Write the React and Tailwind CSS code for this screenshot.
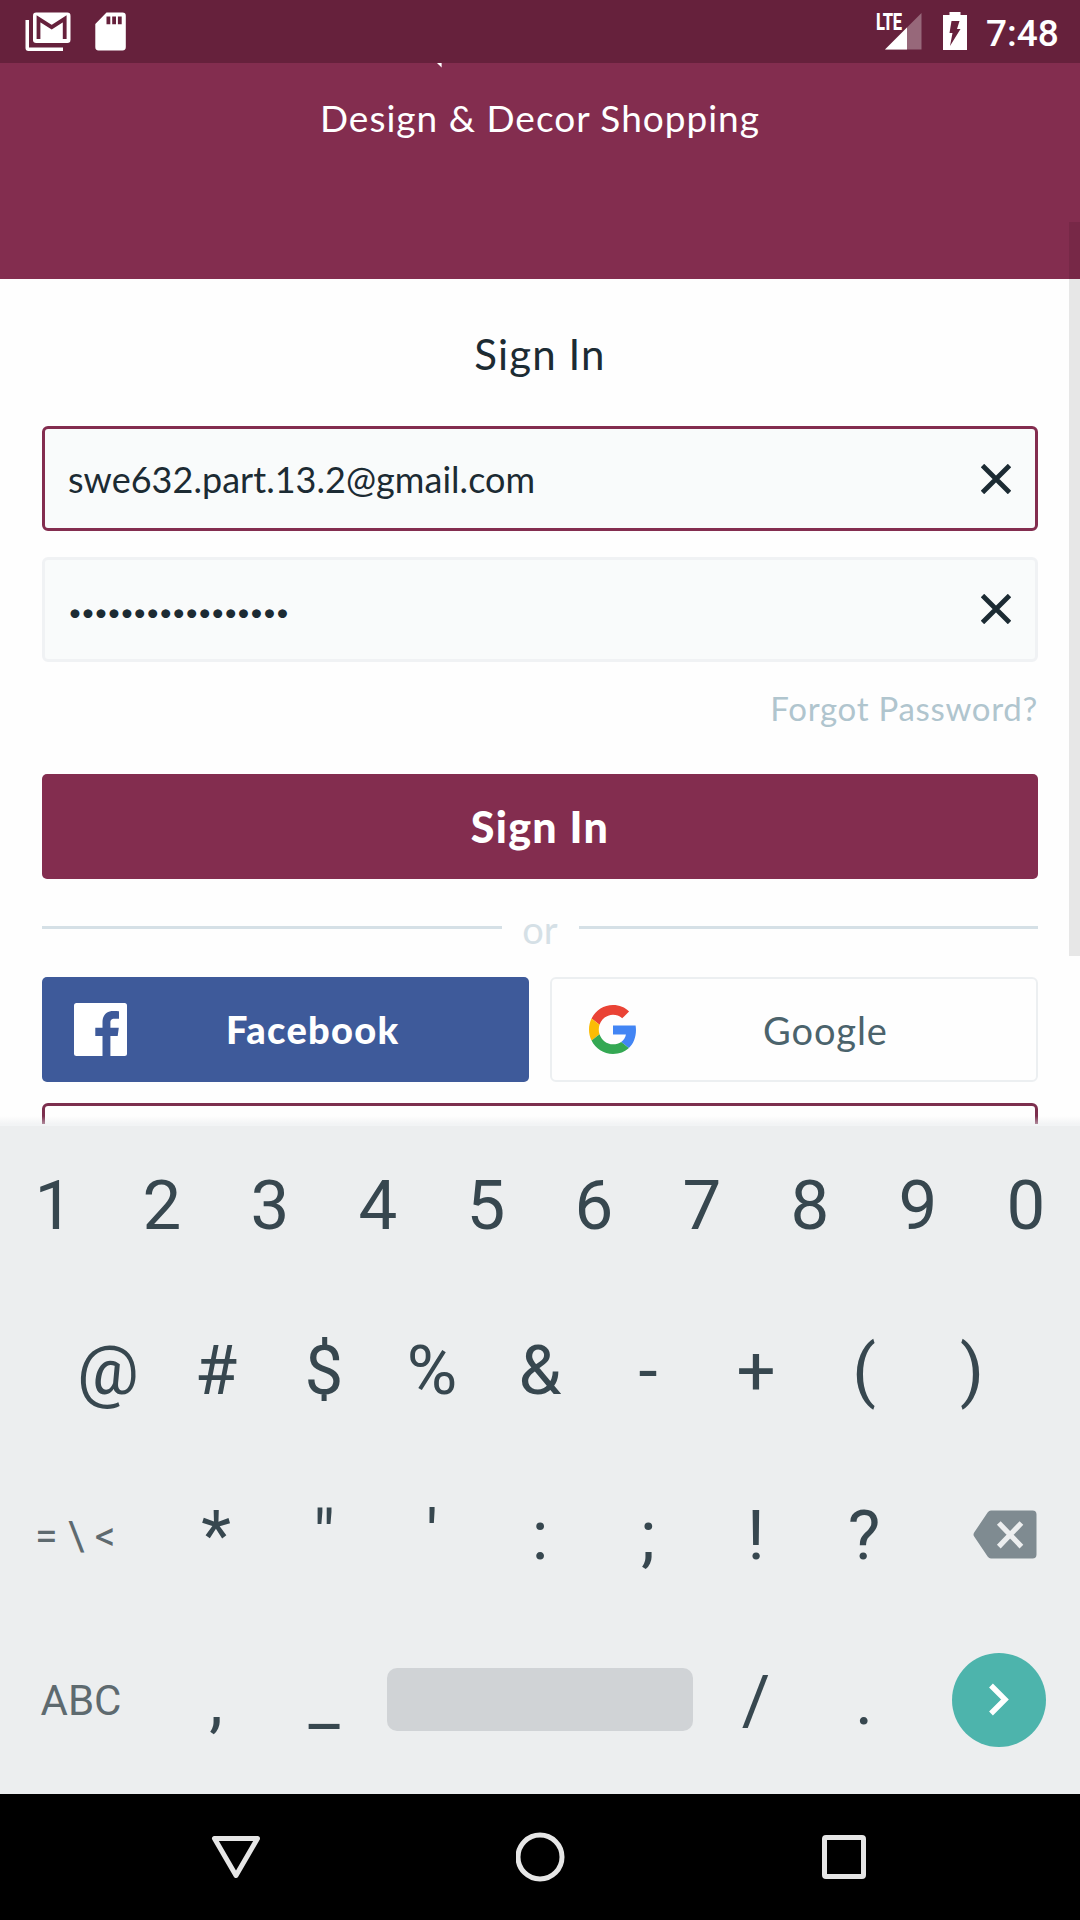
const DIGITS = ["1", "2", "3", "4", "5", "6", "7", "8", "9", "0"];
const SYMBOLS = ["@", "#", "$", "%", "&", "-", "+", "(", ")"];
const PUNCTUATION = ["*", '"', "'", ":", ";", "!", "?"];

function GmailIcon() {
  return (
    <svg width="46" height="40" viewBox="0 0 46 40" fill="none">
      <path d="M0.5 8H4v27.5h34V39H3.5a3 3 0 0 1-3-3z" fill="#fff" />
      <rect x="8" y="0.5" width="37.5" height="30.5" rx="3.2" fill="#fff" />
      <path d="M13.5 27V6.8L26.7 15.2L39.7 6.8V27" stroke="#66213c" strokeWidth="3.8" />
    </svg>
  );
}

function SdCardIcon() {
  return (
    <svg width="31" height="39" viewBox="0 0 31 39">
      <path d="M11.5 0.5H27.5A3.3 3.3 0 0 1 30.8 3.8V35A3.3 3.3 0 0 1 27.5 38.4H3.5A3.3 3.3 0 0 1 0.3 35V12z" fill="#fff" />
      <path d="M11.5 4.5h3.8v7.8h-3.8zM17.2 4.5H21v7.8h-3.8zM22.9 4.5h3.8v7.8h-3.8z" fill="#66213c" />
    </svg>
  );
}

function SignalIcon() {
  return (
    <div className="relative h-[38px] w-[46px]">
      <svg width="46" height="38" viewBox="0 0 46 38">
        <path d="M9 37.5L45.5 1V37.5z" fill="#fff" opacity="0.32" />
        <path d="M9 37.5L31 15.5V37.5z" fill="#fff" />
      </svg>
      <span className="absolute left-0 top-[-1px] origin-left scale-x-[0.72] text-[23px] font-extrabold leading-[23px] tracking-[-0.6px]">
        LTE
      </span>
    </div>
  );
}

function BatteryIcon() {
  return (
    <svg width="24" height="38" viewBox="0 0 24 38">
      <path d="M6.5 0H17.5V3H24V38H0V3H6.5z" fill="#fff" />
      <path d="M8.5 9H16.5L14 17H17.5L7 34L9.5 21H6.5z" fill="#66213c" />
    </svg>
  );
}

function StatusBar() {
  return (
    <div className="flex h-[63px] shrink-0 items-start bg-[#66213c] pl-[24.5px] pr-[21px] pt-3 text-white">
      <GmailIcon />
      <div className="ml-[24.5px]">
        <SdCardIcon />
      </div>
      <div className="flex-1" />
      <SignalIcon />
      <div className="ml-[21px]">
        <BatteryIcon />
      </div>
      <span className="ml-[19px] w-[73px] whitespace-nowrap pt-px text-[37px] font-medium leading-[42px]">7:48</span>
    </div>
  );
}

function Header() {
  return (
    <header className="relative flex h-[216px] shrink-0 justify-center bg-[#832d4f] pt-[34px] text-white">
      <svg className="absolute left-[437px] top-0" width="5" height="5" viewBox="0 0 5 5">
        <path d="M0 0H4.6V4.6z" fill="#fff" />
      </svg>
      <h1 className="h-10 whitespace-nowrap text-[37px] leading-[42px] tracking-[1px]">Design &amp; Decor Shopping</h1>
    </header>
  );
}

function ClearIcon() {
  return (
    <svg width="30" height="30" viewBox="0 0 30 30" stroke="#1c2b33" strokeWidth="4.8">
      <path d="M1.5 1.5L28.5 28.5M28.5 1.5L1.5 28.5" />
    </svg>
  );
}

function FacebookIcon() {
  return (
    <svg width="53" height="53" viewBox="0 0 53 53">
      <rect width="53" height="53" rx="2.5" fill="#fff" />
      <path
        d="M28.5 53V33H21.3V24.8H28.5V19.2C28.5 12 32.8 8 39.2 8C42 8 44.3 8.2 45 8.3V15.7H40.5C37.1 15.7 36.4 17.3 36.4 19.7V24.8H44.8L43.7 33H36.4V53z"
        fill="#3e5a9a"
      />
    </svg>
  );
}

function GoogleIcon() {
  return (
    <svg width="47" height="49" viewBox="0 0 47 48" preserveAspectRatio="none">
      <path fill="#ea4335" d="M24 9.5c3.54 0 6.71 1.22 9.21 3.6l6.85-6.85C35.9 2.38 30.47 0 24 0 14.62 0 6.51 5.38 2.56 13.22l7.98 6.19C12.43 13.72 17.74 9.5 24 9.5z" />
      <path fill="#4285f4" d="M46.98 24.55c0-1.57-.15-3.09-.38-4.55H24v9.02h12.94c-.58 2.96-2.26 5.48-4.78 7.18l7.73 6c4.51-4.18 7.09-10.36 7.09-17.65z" />
      <path fill="#fbbc05" d="M10.53 28.59c-.48-1.45-.76-2.99-.76-4.59s.27-3.14.76-4.59l-7.98-6.19C.92 16.46 0 20.12 0 24c0 3.88.92 7.54 2.56 10.78l7.97-6.19z" />
      <path fill="#34a853" d="M24 48c6.48 0 11.93-2.13 15.89-5.81l-7.73-6c-2.15 1.45-4.92 2.3-8.16 2.3-6.26 0-11.57-4.22-13.47-9.91l-7.98 6.19C6.51 42.62 14.62 48 24 48z" />
    </svg>
  );
}

function SignInForm() {
  return (
    <main className="relative h-[845px] shrink-0 overflow-hidden bg-[#fefefe] px-[42px]">
      <h2 className="mt-[50px] h-[49px] text-center text-[42px] leading-[50px] tracking-[1.1px] text-[#1c2b33]">Sign In</h2>

      <div className="mt-12 flex h-[105px] items-center justify-between rounded-[6px] border-[3px] border-[#832d4f] bg-[#f9fbfb] pl-[23px] pr-[24px]">
        <span className="whitespace-nowrap text-[36px] leading-[44px] tracking-[0.03px] text-[#1c2b33]">swe632.part.13.2@gmail.com</span>
        <ClearIcon />
      </div>

      <div className="mt-[26px] flex h-[105px] items-center justify-between rounded-[6px] border-[3px] border-[#f0f2f4] bg-[#f9fbfb] pb-[2px] pl-[23px] pr-[24px]">
        <span className="pt-[7px] text-[24px] leading-[44px] tracking-[-0.95px] text-[#1c2b33]">•••••••••••••••••</span>
        <ClearIcon />
      </div>

      <div className="mt-[26px] h-[40px] text-right text-[33px] leading-[40px] tracking-[0.7px] text-[#b0c5ce]">Forgot Password?</div>

      <button className="mt-[46px] flex h-[105px] w-full items-center justify-center rounded-[5px] bg-[#832d4f] pt-px text-[43px] font-black tracking-[1.3px] text-white">
        Sign In
      </button>

      <div className="mt-[26px] flex h-[44px] items-center">
        <div className="h-[3px] flex-1 bg-[#d5e0e6]" />
        <span className="w-[77px] pt-[3px] text-center text-[38px] leading-[44px] text-[#d5e0e6]">or</span>
        <div className="h-[3px] flex-1 bg-[#d5e0e6]" />
      </div>

      <div className="mt-[28px] grid grid-cols-[487px_488px] gap-[21px]">
        <button className="flex h-[105px] items-center rounded-[5px] bg-[#3e5a9a] pl-8 text-[38px] font-black tracking-[1.3px] text-white">
          <FacebookIcon />
          <span className="ml-[99px]">Facebook</span>
        </button>
        <button className="flex h-[105px] items-center rounded-[6px] border-2 border-[#eceff1] pl-[37px] text-[38px] tracking-[0.9px] text-[#4b636c]">
          <GoogleIcon />
          <span className="ml-[127px] pt-px">Google</span>
        </button>
      </div>

      <div className="mt-[21px] h-[105px] rounded-[6px] border-[3px] border-[#7c2f4e]" />
      <div className="absolute inset-x-0 bottom-0 h-2 bg-linear-to-b from-transparent to-[#e6e9eb]/50" />
    </main>
  );
}

function Key({ children }) {
  return <span className="flex w-[108px] shrink-0 items-center justify-center">{children}</span>;
}

function LowKey({ children }) {
  return <span className="flex w-[108px] shrink-0 items-center justify-center pt-[2px]">{children}</span>;
}

function BackspaceIcon() {
  return (
    <svg width="64" height="49" viewBox="0 0 64 49">
      <path d="M18 0.5H59.5A4 4 0 0 1 63.5 4.5V44.5A4 4 0 0 1 59.5 48.5H18Q16 48.5 14.8 46.7L1 26.3Q0 24.5 1 22.7L14.8 2.3Q16 0.5 18 0.5z" fill="#7f8b91" />
      <path d="M25.8 13L48.4 36.6M48.4 13L25.8 36.6" stroke="#eceeef" strokeWidth="5.2" />
    </svg>
  );
}

function Keyboard() {
  return (
    <section className="flex h-[670px] shrink-0 flex-col border-t-2 border-[#f2f4f5] bg-[#eceeef] text-[69px] leading-none text-[#37474f]">
      <div className="flex h-[161px] pb-[2px]">
        {DIGITS.map((k) => (
          <Key key={k}>{k}</Key>
        ))}
      </div>
      <div className="flex h-[165px] px-[54px]">
        {SYMBOLS.map((k) => (
          <LowKey key={k}>{k}</LowKey>
        ))}
      </div>
      <div className="flex h-[165px]">
        <span className="flex w-[162px] items-center whitespace-pre pl-[35px] pt-[3px] text-[41px] text-[#5e6a6f]">
          {"= \\ <"}
        </span>
        {PUNCTUATION.map((k) => (
          <LowKey key={k}>{k}</LowKey>
        ))}
        <span className="flex w-[162px] items-center justify-center pl-3">
          <BackspaceIcon />
        </span>
      </div>
      <div className="flex h-[165px]">
        <span className="flex w-[162px] items-center justify-center pt-[2px] text-[42px] text-[#5e6a6f]">ABC</span>
        <LowKey>,</LowKey>
        <LowKey>_</LowKey>
        <span className="flex w-[324px] items-center justify-center">
          <span className="h-[63px] w-[306px] rounded-[10px] bg-[#d0d3d6]" />
        </span>
        <LowKey>/</LowKey>
        <LowKey>.</LowKey>
        <span className="flex w-[162px] items-center justify-center">
          <span className="flex size-[94px] items-center justify-center rounded-full bg-[#4db4ac]">
            <svg width="20" height="33" viewBox="0 0 20 33" fill="none" stroke="#fff" strokeWidth="5.4">
              <path d="M2 2.5L16 16.5L2 30.5" />
            </svg>
          </span>
        </span>
      </div>
    </section>
  );
}

function NavBar() {
  return (
    <nav className="flex h-[126px] shrink-0 items-center justify-between bg-black pl-[211px] pr-[213px]">
      <svg width="50" height="50" viewBox="0 0 50 50" fill="none" stroke="#e6e6e6" strokeWidth="5" strokeLinejoin="round">
        <path d="M3.5 6.5H46.5L25 43.5z" />
      </svg>
      <svg width="50" height="50" viewBox="0 0 50 50" fill="none" stroke="#e6e6e6" strokeWidth="5">
        <circle cx="24" cy="25" r="22" />
      </svg>
      <svg width="46" height="46" viewBox="0 0 46 46" fill="none" stroke="#e6e6e6" strokeWidth="5">
        <rect x="3.5" y="3.5" width="39" height="39" rx="1.5" />
      </svg>
    </nav>
  );
}

export default function App() {
  return (
    <div className="relative flex h-[1920px] w-[1080px] flex-col overflow-hidden bg-white font-['Roboto',sans-serif]">
      <StatusBar />
      <div className="font-['Lato',sans-serif]">
        <Header />
        <SignInForm />
      </div>
      <Keyboard />
      <NavBar />
      {/* Page scroll thumb */}
      <div className="absolute right-0 top-[222px] h-[734px] w-[11px] bg-black/9" />
    </div>
  );
}
